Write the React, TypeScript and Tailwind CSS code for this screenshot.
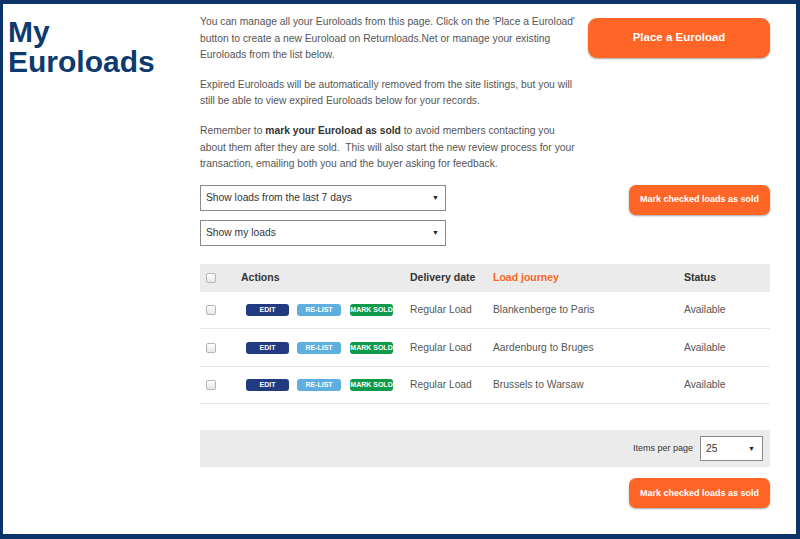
import React from "react";

const font = { fontFamily: '"Liberation Sans", Arial, sans-serif' };

function Checkbox() {
  return (
    <span className="inline-block w-[10px] h-[10px] rounded-[2px] border border-[#b5b5b5] bg-gradient-to-b from-[#ffffff] to-[#e6e6e6] align-middle" />
  );
}

function Caret() {
  return <span className="text-[7px] text-[#222] leading-none">▼</span>;
}

function SelectBox({ label }: { label: string }) {
  return (
    <div className="h-[26px] w-[246px] border border-[#8a8a8a] bg-white flex items-center justify-between pl-[5px] pr-[6px] text-[10.3px] text-[#333]">
      <span>{label}</span>
      <Caret />
    </div>
  );
}

function OrangeSmall() {
  return (
    <button className="w-[141px] h-[30px] rounded-[7px] bg-[#ff6526] text-white font-bold text-[9px] shadow-[0_1px_2px_rgba(0,0,0,0.35)]">
      Mark checked loads as sold
    </button>
  );
}

const rows = [
  { journey: "Blankenberge to Paris" },
  { journey: "Aardenburg to Bruges" },
  { journey: "Brussels to Warsaw" },
];

const cols = "grid grid-cols-[36px_169px_83px_191px_1fr] items-center";

export default function App() {
  return (
    <div
      style={font}
      className="w-[800px] h-[539px] bg-white border-t-[4px] border-l-[3px] border-r-[4px] border-b-[5px] border-[#0c3468] flex overflow-hidden"
    >
      <div className="w-[197px] shrink-0 pl-[5px] pt-[13px]">
        <h1 className="text-[30px] leading-[30px] font-bold text-[#0d3a6f]">
          My
          <br />
          Euroloads
        </h1>
      </div>
      <div className="w-[570px] shrink-0 pt-[10px]">
        <div className="flex">
          <div className="w-[378px] text-[10.3px] leading-[16.6px] text-[#555]">
            <p>
              You can manage all your Euroloads from this page. Click on the 'Place a Euroload' button to create a new
              Euroload on Returnloads.Net or manage your existing Euroloads from the list below.
            </p>
            <p className="mt-[13px]">
              Expired Euroloads will be automatically removed from the site listings, but you will still be able to
              view expired Euroloads below for your records.
            </p>
            <p className="mt-[13px]">
              Remember to <b className="text-[#333]">mark your Euroload as sold</b> to avoid members contacting you
              about them after they are sold.&nbsp; This will also start the new review process for your
              transaction, emailing both you and the buyer asking for feedback.
            </p>
          </div>
          <div className="ml-auto pt-[4px]">
            <button className="w-[182px] h-[40px] rounded-[9px] bg-[#ff6526] text-white font-bold text-[11.5px] shadow-[0_1px_2px_rgba(0,0,0,0.35)]">
              Place a Euroload
            </button>
          </div>
        </div>

        <div className="flex mt-[12px]">
          <div className="flex flex-col gap-[9px]">
            <SelectBox label="Show loads from the last 7 days" />
            <SelectBox label="Show my loads" />
          </div>
          <div className="ml-auto">
            <OrangeSmall />
          </div>
        </div>

        <div className="mt-[18px] text-[10.3px]">
          <div className={`${cols} h-[28px] bg-[#ebebeb] font-bold text-[10.5px] text-[#333]`}>
            <div className="pl-[6px] flex items-center">
              <Checkbox />
            </div>
            <div className="pl-[5px]">Actions</div>
            <div className="pl-[5px]">Delivery date</div>
            <div className="pl-[5px] text-[#ff6526]">Load journey</div>
            <div className="pl-[5px]">Status</div>
          </div>
          {rows.map((r) => (
            <div key={r.journey} className={`${cols} h-[37.5px] border-b border-[#e6e6e6] text-[#555]`}>
              <div className="pl-[6px] flex items-center">
                <Checkbox />
              </div>
              <div className="pl-[10px] flex items-center gap-[8px]">
                <span className="w-[43px] h-[12px] rounded-[3px] bg-[#223a80] text-white text-[7px] font-semibold leading-[12px] text-center">
                  EDIT
                </span>
                <span className="w-[44px] h-[12px] rounded-[3px] bg-[#5eaee0] text-white text-[7px] font-semibold leading-[12px] text-center">
                  RE-LIST
                </span>
                <span className="w-[43px] h-[12px] rounded-[3px] bg-[#0e9a4a] text-white text-[7px] font-semibold leading-[12px] text-center ml-[1px] whitespace-nowrap">
                  MARK SOLD
                </span>
              </div>
              <div className="pl-[5px]">Regular Load</div>
              <div className="pl-[5px]">{r.journey}</div>
              <div className="pl-[5px]">Available</div>
            </div>
          ))}

          <div className="mt-[26px] h-[37px] bg-[#ebebeb] flex items-center justify-end pr-[7px]">
            <span className="text-[9px] text-[#333] mr-[7px]">Items per page</span>
            <div className="w-[63px] h-[25px] border border-[#8a8a8a] bg-white flex items-center justify-between pl-[5px] pr-[7px] text-[10.3px] text-[#333]">
              <span>25</span>
              <Caret />
            </div>
          </div>
          <div className="flex justify-end mt-[11px]">
            <OrangeSmall />
          </div>
        </div>
      </div>
    </div>
  );
}
